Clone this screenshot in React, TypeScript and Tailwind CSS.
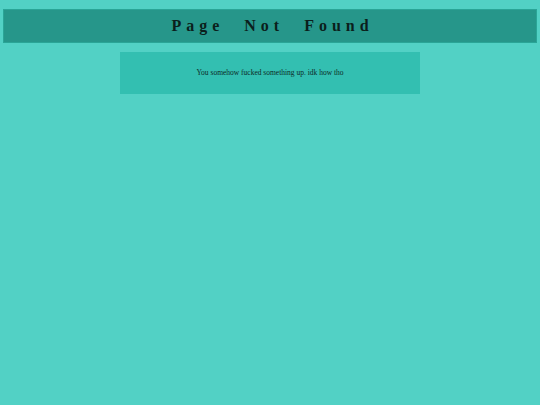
export default function App() {
  return (
    <div className="min-h-[405px] w-full bg-[#52d1c5] px-[3px] pt-[9px]" style={{ fontFamily: '"Liberation Serif", Georgia, serif' }}>
      {/* Header */}
      <div className="flex h-[34px] items-center justify-center border border-[#2aa597] bg-[#26968a]">
        <h1 className="pl-[5px] text-[16px] font-bold tracking-[5px] [word-spacing:11px] text-[#0b1f1c]">
          Page Not Found
        </h1>
      </div>

      {/* Message */}
      <div className="mx-auto mt-[9px] flex h-[42px] w-[300px] items-center justify-center bg-[#33bfb1]">
        <p className="text-[7.5px] font-medium text-[#0d2a26]">You somehow fucked something up. idk how tho</p>
      </div>
    </div>
  );
}
